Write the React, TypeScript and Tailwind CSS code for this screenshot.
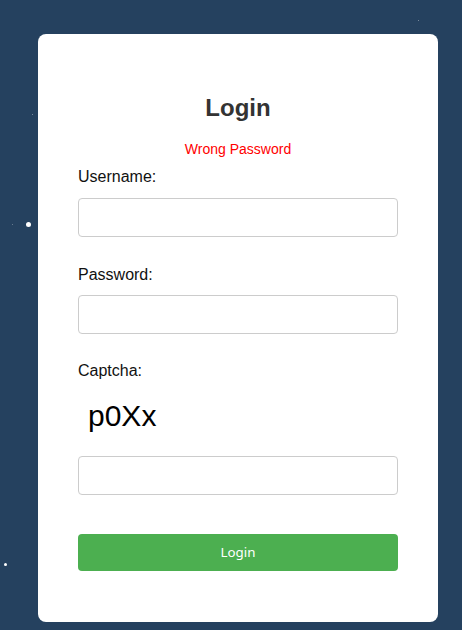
import React from "react";

const stars = [
  { x: 418, y: 20, s: 1, o: 0.5 },
  { x: 32, y: 114, s: 1, o: 0.5 },
  { x: 26, y: 222, s: 5, o: 1 },
  { x: 12, y: 224, s: 1, o: 0.4 },
  { x: 4, y: 563, s: 3, o: 1 },
];

export default function App() {
  return (
    <div
      className="relative h-[630px] w-full overflow-hidden bg-[#25415f] pt-[34px]"
      style={{ fontFamily: '"Liberation Sans", Arial, sans-serif' }}
    >
      {stars.map((s, i) => (
        <div
          key={i}
          className="absolute rounded-full bg-white"
          style={{ left: s.x, top: s.y, width: s.s, height: s.s, opacity: s.o }}
        />
      ))}
      <div className="relative ml-[38px] flex h-[588px] w-[400px] flex-col rounded-[8px] bg-white px-[40px] pt-[60px]">
        <h2 className="text-center text-[24px] font-bold leading-[28px] text-[#333333]">Login</h2>
        <p className="mt-[17px] text-center text-[14px] leading-[20px] text-[#ff0000]">Wrong Password</p>
        <label className="mt-[6px] text-[16px] leading-[24px] text-[#111111]">Username:</label>
        <input className="mt-[9px] h-[39px] w-full rounded-[4px] border border-[#cccccc] px-[10px] outline-none" />
        <label className="mt-[26px] text-[16px] leading-[24px] text-[#111111]">Password:</label>
        <input type="password" className="mt-[8px] h-[39px] w-full rounded-[4px] border border-[#cccccc] px-[10px] outline-none" />
        <label className="mt-[25px] text-[16px] leading-[24px] text-[#111111]">Captcha:</label>
        <div className="mt-[15px] pl-[10px] text-[30px] leading-[36px] text-black">p0Xx</div>
        <input className="mt-[22px] h-[39px] w-full rounded-[4px] border border-[#cccccc] px-[10px] outline-none" />
        <button
          className="mt-[39px] h-[37px] w-full rounded-[4px] bg-[#4caf50] text-[13.33px] text-white"
          style={{ fontFamily: '"Noto Sans", "Open Sans", sans-serif' }}
        >
          Login
        </button>
      </div>
    </div>
  );
}
